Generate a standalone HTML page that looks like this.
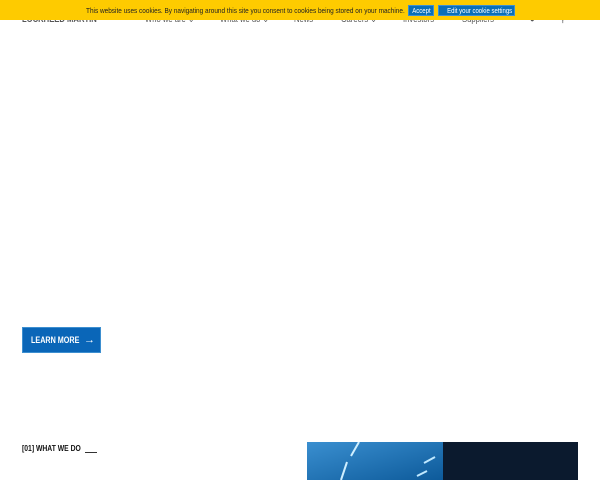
<!DOCTYPE html>
<html><head><meta charset="utf-8"><style>
*{margin:0;padding:0;box-sizing:border-box}
body{width:600px;height:480px;overflow:hidden;background:#fff;font-family:"Liberation Sans",sans-serif;position:relative}
.nav{position:absolute;top:12px;left:0;width:600px;height:16px;font-size:9px;color:#555}
.nav span{position:absolute;top:2px;white-space:nowrap;transform-origin:0 0;transform:scaleX(0.85)}
.cookie{position:absolute;top:0;left:0;width:600px;height:20px;background:#fecb00;font-size:7.5px;color:#222;}
.cookie .t{position:absolute;left:86px;top:6px;white-space:nowrap;transform-origin:0 0;transform:scaleX(0.86)}
.btn{position:absolute;top:5px;height:11px;background:#0b6fb8;color:#fff;font-size:7.5px;line-height:10px;border:1px solid #3d8fd0;text-align:center;white-space:nowrap;overflow:hidden}
.btn i{font-style:normal;display:inline-block;transform:scaleX(0.8)}
.lm{position:absolute;left:22px;top:327px;width:79px;height:26px;background:#0a66b8;color:#fff;font-size:9px;font-weight:bold;line-height:24px;border:1px solid #3d8fd0}
.lm span{position:absolute;left:8px;top:0;white-space:nowrap;transform-origin:0 50%;transform:scaleX(0.8)}
.lm b{position:absolute;left:61px;top:0;font-size:11px}
.sec{position:absolute;left:22px;top:444px;font-size:8px;font-weight:bold;color:#111;white-space:nowrap;transform-origin:0 0;transform:scaleX(0.85)}
.line{position:absolute;left:85px;top:452px;width:12px;height:1px;background:#333}
.img{position:absolute;left:307px;top:442px;width:271px;height:38px}
</style></head><body>
<div class="nav">
<span style="left:22px;font-weight:bold">LOCKHEED MARTIN</span>
<span style="left:145px">Who we are ⌄</span>
<span style="left:220px">What we do ⌄</span>
<span style="left:294px">News</span>
<span style="left:341px">Careers ⌄</span>
<span style="left:403px">Investors</span>
<span style="left:462px">Suppliers</span>
<span style="left:530px">●</span>
<span style="left:560px">⚲</span>
</div>
<div class="cookie"><span class="t">This website uses cookies. By navigating around this site you consent to cookies being stored on your machine.</span>
<span class="btn" style="left:408px;width:26px"><i>Accept</i></span>
<span class="btn" style="left:438px;width:77px"><i>Edit your cookie settings</i></span></div>
<div class="lm"><span>LEARN MORE</span><b>→</b></div>
<div class="sec">[01] WHAT WE DO</div><div class="line"></div>
<svg class="img" viewBox="0 0 271 38">
<defs><linearGradient id="g" x1="0" y1="0" x2="1" y2="1"><stop offset="0" stop-color="#3a8fd0"/><stop offset="1" stop-color="#0d5a9a"/></linearGradient></defs>
<rect width="136" height="38" fill="url(#g)"/>
<rect x="136" width="135" height="38" fill="#0b1a2e"/>
<path d="M52 0 L44 14 M40 20 L34 38" stroke="#cfefff" stroke-width="2"/>
<path d="M117 21 L128 15 M110 34 L120 29" stroke="#bfe8ff" stroke-width="2"/>
</svg>
</body></html>
